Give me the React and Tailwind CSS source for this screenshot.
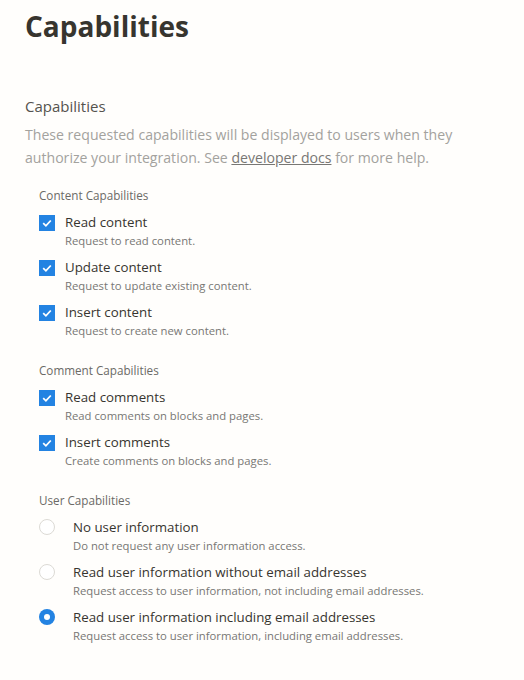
import React, { useState } from 'react';

const font = { fontFamily: '"Open Sans", "Noto Sans", sans-serif' };

const CheckItem = ({ label, hint, checked, onToggle }) => (
    <div className="flex items-start">
        <button
            onClick={onToggle}
            className={`mt-[3px] w-4 h-4 flex items-center justify-center shrink-0 ${checked ? 'bg-[#2383e2]' : 'border border-[#d3d1cb] bg-white'}`}
        >
            {checked && (
                <svg width="12" height="12" viewBox="0 0 12 12" fill="none">
                    <path d="M2.2 6.2 L4.9 8.8 L9.8 3.5" stroke="white" strokeWidth="1.8" />
                </svg>
            )}
        </button>
        <div className="ml-[10px]">
            <div className="text-[13.3px] leading-[20px] text-[#37352f]">{label}</div>
            <div className="text-[11.3px] leading-[18px] text-[#787774]">{hint}</div>
        </div>
    </div>
);

const RadioItem = ({ label, hint, selected, onSelect }) => (
    <div className="flex items-start">
        <button
            onClick={onSelect}
            className={`mt-[2px] w-4 h-4 rounded-full shrink-0 flex items-center justify-center ${selected ? 'bg-[#2383e2]' : 'border border-[#dcdad5] bg-white'}`}
        >
            {selected && <span className="w-[6px] h-[6px] rounded-full bg-white" />}
        </button>
        <div className="ml-[18px]">
            <div className="text-[13.3px] leading-[20px] text-[#37352f]">{label}</div>
            <div className="text-[11.3px] leading-[18px] text-[#787774]">{hint}</div>
        </div>
    </div>
);

const Group = ({ title, children }) => (
    <div className="pl-[14px]">
        <div className="text-[11.7px] leading-[16px] text-[#6b6a66]">{title}</div>
        <div className="mt-[9px] flex flex-col gap-[7px]">{children}</div>
    </div>
);

export default function App() {
    const [checks, setChecks] = useState({
        readContent: true,
        updateContent: true,
        insertContent: true,
        readComments: true,
        insertComments: true,
    });
    const [userLevel, setUserLevel] = useState('withEmail');

    const toggle = (key) => setChecks((c) => ({ ...c, [key]: !c[key] }));

    return (
        <div className="min-h-[680px] bg-[#fffefc] px-[25px] pt-[6px]" style={font}>
            <h1 className="text-[28px] leading-[40px] font-bold text-[#37352f]">Capabilities</h1>

            <div className="mt-[49px]">
                <h2 className="text-[15px] leading-[22px] text-[#55534e]">Capabilities</h2>
                <p className="mt-[6px] text-[14.1px] leading-[23px] text-[#a3a29e]">
                    These requested capabilities will be displayed to users when they<br />
                    authorize your integration. See{' '}
                    <a className="underline text-[#787774]">developer docs</a> for more help.
                </p>
            </div>

            <div className="mt-[18px] flex flex-col gap-[22px]">
                <Group title="Content Capabilities">
                    <CheckItem label="Read content" hint="Request to read content." checked={checks.readContent} onToggle={() => toggle('readContent')} />
                    <CheckItem label="Update content" hint="Request to update existing content." checked={checks.updateContent} onToggle={() => toggle('updateContent')} />
                    <CheckItem label="Insert content" hint="Request to create new content." checked={checks.insertContent} onToggle={() => toggle('insertContent')} />
                </Group>

                <Group title="Comment Capabilities">
                    <CheckItem label="Read comments" hint="Read comments on blocks and pages." checked={checks.readComments} onToggle={() => toggle('readComments')} />
                    <CheckItem label="Insert comments" hint="Create comments on blocks and pages." checked={checks.insertComments} onToggle={() => toggle('insertComments')} />
                </Group>

                <Group title="User Capabilities">
                    <RadioItem label="No user information" hint="Do not request any user information access." selected={userLevel === 'none'} onSelect={() => setUserLevel('none')} />
                    <RadioItem label="Read user information without email addresses" hint="Request access to user information, not including email addresses." selected={userLevel === 'noEmail'} onSelect={() => setUserLevel('noEmail')} />
                    <RadioItem label="Read user information including email addresses" hint="Request access to user information, including email addresses." selected={userLevel === 'withEmail'} onSelect={() => setUserLevel('withEmail')} />
                </Group>
            </div>
        </div>
    );
}
